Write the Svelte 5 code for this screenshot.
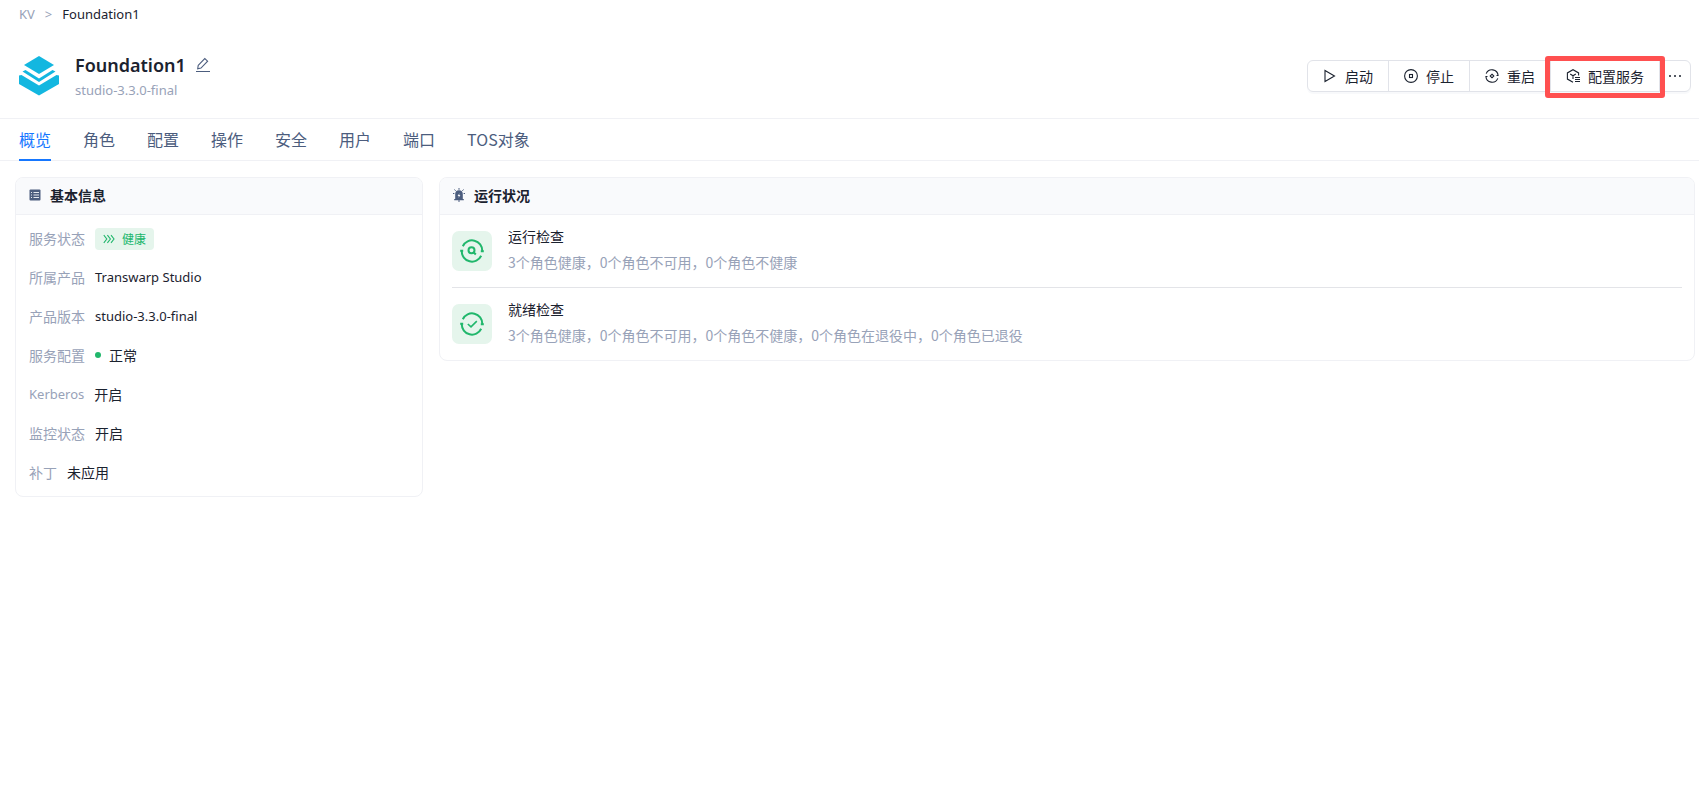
<script>
	const tabs = ["概览", "角色", "配置", "操作", "安全", "用户", "端口", "TOS对象"];
	let activeTab = $state("概览");

	const info = [
		{ label: "服务状态", value: "健康", kind: "badge" },
		{ label: "所属产品", value: "Transwarp Studio", kind: "latin" },
		{ label: "产品版本", value: "studio-3.3.0-final", kind: "latin" },
		{ label: "服务配置", value: "正常", kind: "dot" },
		{ label: "Kerberos", value: "开启" },
		{ label: "监控状态", value: "开启" },
		{ label: "补丁", value: "未应用" }
	];

	const checks = [
		{
			title: "运行检查",
			text: "3个角色健康，0个角色不可用，0个角色不健康",
			icon: "search"
		},
		{
			title: "就绪检查",
			text: "3个角色健康，0个角色不可用，0个角色不健康，0个角色在退役中，0个角色已退役",
			icon: "tick"
		}
	];
</script>

<nav class="breadcrumb latin" aria-label="breadcrumb">
	<a href="#kv">KV</a>
	<span class="sep">&gt;</span>
	<span>Foundation1</span>
</nav>

<header class="head">
	<svg class="logo" viewBox="0 0 40 40" aria-hidden="true">
		<path d="M20 0 35 9 20 18 5 9Z" />
		<path d="M3.5 15.5 6.5 14 20 22.500 33.500 14 36.500 15.500 20 26Z" />
		<path d="M0 19.500 2.500 19 20 29.500 37.500 19 40 19.500V28L20 39.500 0 28Z" />
	</svg>
	<div class="names">
		<div class="title-row">
			<h1>Foundation1</h1>
			<button type="button" class="edit" aria-label="编辑">
				<svg width="16" height="16" viewBox="0 0 16 16" class="line">
					<path d="M3.200 8.400 9.800 1.500 12.600 4.200 6 11.100 2.700 11.800Z M1 14.500H15" />
				</svg>
			</button>
		</div>
		<div class="version latin">studio-3.3.0-final</div>
	</div>

	<div class="actions">
		<button type="button">
			<svg width="14" height="14" viewBox="0 0 14 14" class="line">
				<path d="M2 1.500V12.500L11.500 7Z" />
			</svg>
			启动
		</button>
		<button type="button">
			<svg width="14" height="14" viewBox="0 0 14 14" class="line">
				<circle cx="7" cy="7" r="6.400" />
				<rect x="5.500" y="5.500" width="3" height="3" />
			</svg>
			停止
		</button>
		<button type="button">
			<svg width="14" height="14" viewBox="0 0 14 14" class="line">
				<path d="M7 5.200 8.800 7 7 8.800 5.200 7Z" />
				<path d="M1.200 4.600A6.200 6.200 0 0 1 13.100 6.500M12.800 9.400A6.200 6.200 0 0 1 .9 7.500M11.500 6.500H13.600M.4 7.500H2.500" />
			</svg>
			重启
		</button>
		<button type="button" class="marked">
			<svg width="14" height="14" viewBox="0 0 14 14" class="line">
				<path d="M12.600 6.500V3.900L7 .7 1.400 3.900V10.100L7 13.300M4.200 5 7 6.800 9.800 5M7 6.800V10M9 8.500H14M9 10.500H14M9 12.500H14" />
			</svg>
			配置服务
		</button>
		<button type="button" class="more" aria-label="更多">
			<svg width="14" height="14" viewBox="0 0 14 14">
				<circle cx="2" cy="7" r="1" />
				<circle cx="7" cy="7" r="1" />
				<circle cx="12" cy="7" r="1" />
			</svg>
		</button>
	</div>
</header>

<div class="tabs" role="tablist">
	{#each tabs as tab}
		<button
			type="button"
			role="tab"
			aria-selected={tab === activeTab}
			class:active={tab === activeTab}
			onclick={() => (activeTab = tab)}
		>{tab}</button>
	{/each}
</div>

<main>
	<section class="card">
		<h2>
			<svg width="12" height="12" viewBox="0 0 12 12">
				<rect x="0.500" y="0.500" width="11" height="11" rx="1" fill="#4c5d7e" />
				<path d="M2 3.500H3M4.500 3.500H10M2 6H3M4.500 6H10M2 8.500H3M4.500 8.500H10" stroke="#e4e8ef" />
			</svg>
			基本信息
		</h2>
		<dl>
			{#each info as item}
				<div class="row">
					<dt class:latin={item.label === "Kerberos"}>{item.label}</dt>
					{#if item.kind === "badge"}
						<dd class="badge">
							<svg width="12" height="12" viewBox="0 0 12 12" class="line">
								<path d="M.8 2.200 3.800 6 .8 9.800M4.400 2.200 7.400 6 4.400 9.800M8 2.200 11 6 8 9.800" />
							</svg>
							{item.value}
						</dd>
					{:else}
						<dd class={item.kind}>{item.value}</dd>
					{/if}
				</div>
			{/each}
		</dl>
	</section>

	<section class="card">
		<h2>
			<svg width="12" height="14" viewBox="0 0 12 14" fill="#4c5d7e">
				<path fill-rule="evenodd" d="M2.200 11V6A3.800 3.800 0 0 1 9.800 6V11H10.800V12.300H1.200V11ZM6.400 5.200 4.600 8H5.800L5.600 9.800 7.400 7H6.200Z" />
				<path d="M6 0V1.800M6 12V14M1.500 1.500 2.600 2.800M10.500 1.500 9.400 2.800M0 5.500H1.400M10.600 5.500H12" stroke="#4c5d7e" />
			</svg>
			运行状况
		</h2>
		<ul>
			{#each checks as check}
				<li>
					<span class="tile">
						<svg width="24" height="24" viewBox="0 0 24 24">
							<path d="M2.800 7.200A10.200 10.200 0 0 1 22.200 12M21.200 16.800A10.200 10.200 0 0 1 1.800 12" />
							<path d="M20.800 12.300H23.800M.2 11.700H3.200" />
							{#if check.icon === "search"}
								<circle cx="11.500" cy="11.200" r="3" />
								<path d="M13.500 13.200 15.800 15.500" />
							{:else}
								<path d="M7.800 12 11 14.800 16.800 9.200" stroke-width="1.600" />
							{/if}
						</svg>
					</span>
					<div class="check">
						<h3>{check.title}</h3>
						<p>{check.text}</p>
					</div>
				</li>
			{/each}
		</ul>
	</section>
</main>

<style>
	:global(body) {
		background: #fff;
		color: #1b222f;
		font: 14px/22px "Noto Sans CJK SC", sans-serif;
	}

	button {
		font: inherit;
		color: inherit;
		background: none;
		border: 0;
		padding: 0;
		cursor: pointer;
	}

	h1, h2, h3, p, dl, dd, ul {
		margin: 0;
		padding: 0;
	}

	.latin {
		font-family: "Noto Sans", "Noto Sans CJK SC", sans-serif;
		font-size: 13px;
	}

	.line {
		fill: none;
		stroke: currentColor;
		stroke-width: 1.1;
	}

	.breadcrumb {
		display: flex;
		gap: 10px;
		padding: 3px 19px;
	}

	.breadcrumb a {
		color: #98a2b8;
		text-decoration: none;
	}

	.sep {
		color: #98a2b8;
	}

	.head {
		display: flex;
		align-items: center;
		padding: 23px 8px 17px 19px;
		border-bottom: 1px solid #f0f1f5;
	}

	.logo {
		width: 40px;
		height: 40px;
		fill: #13b7e0;
	}

	.names {
		flex: 1;
		margin-left: 16px;
	}

	.title-row {
		display: flex;
		align-items: center;
		gap: 9px;
	}

	h1 {
		font: 600 18px/28px "Noto Sans", sans-serif;
	}

	.edit {
		display: flex;
		color: #4c5d7e;
	}

	.version {
		color: #98a2b8;
	}

	.actions {
		display: flex;
		height: 32px;
		box-sizing: border-box;
		border: 1px solid #e1e3e9;
		border-radius: 6px;
		box-shadow: 0 2px 1px #f8f9fb;
	}

	.actions button {
		display: flex;
		align-items: center;
		gap: 8px;
		padding: 0 15px;
	}

	.actions button + button {
		border-left: 1px solid #e1e3e9;
	}

	.actions .more {
		padding: 0 8px;
		fill: currentColor;
	}

	.marked {
		position: relative;
	}

	.marked::after {
		content: "";
		position: absolute;
		inset: -5px -6px -7px;
		border: 5px solid #ff5050;
		border-radius: 3px;
		z-index: 1;
	}

	.tabs {
		display: flex;
		gap: 32px;
		padding: 0 19px;
		border-bottom: 1px solid #f0f1f5;
	}

	.tabs button {
		height: 42px;
		margin-bottom: -1px;
		border-bottom: 2px solid transparent;
		font-size: 16px;
		color: #4c5d7e;
	}

	.tabs .active {
		color: #1677ff;
		border-color: #1677ff;
	}

	main {
		display: grid;
		grid-template-columns: 408fr 1256fr;
		align-items: start;
		gap: 16px;
		padding: 16px 4px 16px 15px;
	}

	.card {
		border: 1px solid #f0f1f5;
		border-radius: 8px;
		overflow: hidden;
	}

	h2 {
		display: flex;
		align-items: center;
		gap: 9px;
		padding: 0 13px 2px;
		background: #f9fafc;
		border-bottom: 1px solid #f0f1f5;
		font-size: 14px;
		font-weight: 700;
		line-height: 34px;
	}

	dl {
		display: grid;
		gap: 17px;
		padding: 13px 13px 12px;
	}

	.row {
		display: flex;
		gap: 10px;
		height: 22px;
		line-height: 20px;
	}

	dt {
		color: #98a2b8;
	}

	.badge {
		display: flex;
		align-items: center;
		gap: 7px;
		padding: 0 8px;
		border-radius: 4px;
		background: #e5f5ec;
		color: #21b76c;
		font-size: 12px;
	}

	.dot {
		display: flex;
		align-items: center;
		gap: 8px;
		height: 20px;
	}

	.dot::before {
		content: "";
		width: 6px;
		height: 6px;
		border-radius: 50%;
		background: #21b76c;
	}

	ul {
		padding: 0 12px;
		list-style: none;
	}

	li {
		display: flex;
		align-items: center;
		gap: 16px;
		height: 70px;
	}

	li + li {
		border-top: 1px solid #e3e4e8;
	}

	li {
		padding: 1px 0;
	}

	.check {
		padding-bottom: 4px;
	}

	h3 {
		font-size: 14px;
		font-weight: 400;
		line-height: 26px;
	}

	p {
		color: #98a2b8;
		line-height: 26px;
	}

	.tile {
		display: grid;
		place-items: center;
		width: 40px;
		height: 40px;
		border-radius: 7px;
		background: #e5f5ec;
	}

	.tile svg {
		fill: none;
		stroke: #21b76c;
		stroke-width: 2;
	}
</style>
